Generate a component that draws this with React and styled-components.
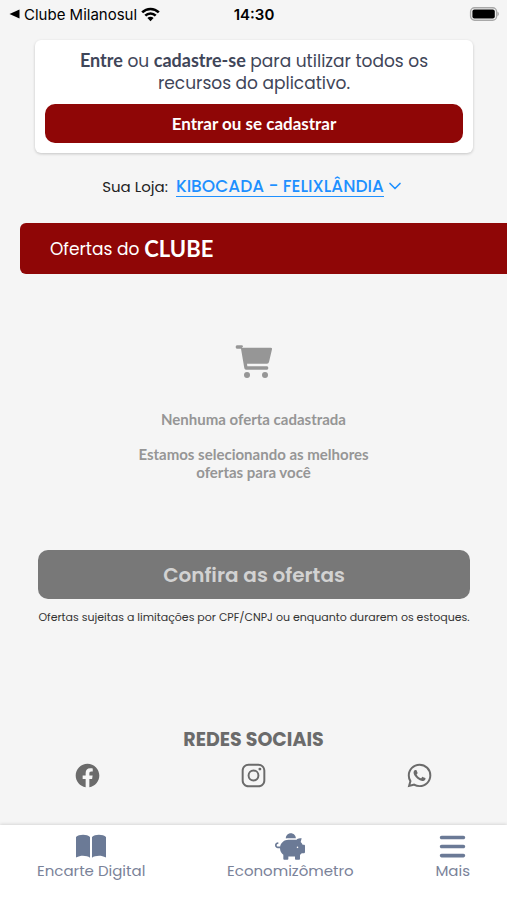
import styled, { createGlobalStyle } from 'styled-components';
import { IoLogoFacebook, IoLogoInstagram, IoLogoWhatsapp } from 'react-icons/io5';
import { FaPiggyBank } from 'react-icons/fa';
import { FaBars } from 'react-icons/fa6';
import { FiChevronDown } from 'react-icons/fi';

const GlobalStyle = createGlobalStyle`
    :root {
        --color-brand: #8f0606;
        --color-page: #f5f5f5;
        --color-link: #1e90ff;
        --color-slate: #6b7a96;
        --color-slate-text: #7a8299;
        --color-grey: #6b6b6b;
        --font-text: Poppins, Inter, sans-serif;
        --font-strong: Lato, sans-serif;
    }

    *, *::before, *::after {
        box-sizing: border-box;
        margin: 0;
        padding: 0;
    }

    body {
        background-color: var(--color-page);
        font-family: var(--font-text);
    }

    button {
        border: none;
        font-family: inherit;
        cursor: pointer;
    }

    svg {
        display: block;
    }
`;

const Page = styled.div`
    min-height: 100vh;
    display: flex;
    flex-direction: column;
`;

const StyledStatusBar = styled.header`
    display: grid;
    grid-template-columns: 1fr auto 1fr;
    align-items: center;
    height: 28px;
    padding: 0 8px 0 9px;
    color: #000;
    font-family: Inter, sans-serif;
    font-size: 15px;
`;

const BackLink = styled.a`
    display: flex;
    align-items: center;
    gap: 4px;
    color: inherit;
    text-decoration: none;
`;

const Clock = styled.time`
    font-weight: 600;
`;

const BatteryIcon = styled.svg`
    justify-self: end;
`;

const Main = styled.main`
    flex: 1;
    display: flex;
    flex-direction: column;
`;

const LoginCard = styled.section`
    margin: 12px 34px 0 35px;
    padding: 9px 10px 10px;
    border-radius: 6px;
    background-color: #fff;
    box-shadow: 0 1px 3px rgba(0, 0, 0, 0.2);
    text-align: center;
`;

const LoginText = styled.p`
    margin-bottom: 10px;
    color: #3f4659;
    font-size: 17px;
    line-height: 22px;

    strong {
        font-family: var(--font-strong);
        font-size: 18px;
        font-weight: 700;
    }
`;

const LoginButton = styled.button`
    width: 100%;
    height: 39px;
    border-radius: 10px;
    background-color: var(--color-brand);
    color: #fff;

    && {
        font: 700 17px var(--font-strong);
    }
`;

const StoreRow = styled.div`
    display: flex;
    align-items: center;
    justify-content: center;
    gap: 8px;
    height: 28px;
    margin-top: 19px;
    color: #222;
    font-size: 15px;
`;

const StoreButton = styled.button`
    display: flex;
    align-items: center;
    gap: 1px;
    background: none;
    color: var(--color-link);
    font-size: 17px;
    font-weight: 500;
    line-height: 20px;

    span {
        border-bottom: 1px solid var(--color-link);
    }
`;

const Banner = styled.h1`
    display: flex;
    align-items: center;
    gap: 5px;
    height: 51px;
    margin: 23px 0 0 20px;
    padding-left: 30px;
    border-radius: 6px 0 0 6px;
    background-color: var(--color-brand);
    color: #fff;
    font-size: 17px;
    font-weight: 400;

    strong {
        font-family: var(--font-strong);
        font-size: 22px;
        font-weight: 700;
    }
`;

const Empty = styled.section`
    display: flex;
    flex-direction: column;
    align-items: center;
    gap: 17px;
    padding-top: 70px;
    color: #969696;
    font: 700 15px/18px var(--font-strong);
    text-align: center;

    svg {
        margin-bottom: 14px;
    }

    p {
        max-width: 240px;
    }
`;

const Offers = styled.section`
    margin: 69px 37px 0 38px;
    color: #333;
    font-size: 11px;
    line-height: 16px;
    text-align: center;
`;

const OffersButton = styled.button`
    width: 100%;
    height: 49px;
    margin-bottom: 10px;
    border-radius: 10px;
    background-color: #787878;
    color: #d2d2d2;
    font-size: 20px;
    font-weight: 600;
`;

const Social = styled.section`
    margin: 102px 5px 0;
    color: var(--color-grey);
    text-align: center;

    h2 {
        font-size: 19px;
        font-weight: 700;
        line-height: 26px;
    }
`;

const SocialList = styled.div`
    display: grid;
    grid-template-columns: repeat(3, 1fr);
    justify-items: center;
    margin-top: 9px;

    a {
        color: inherit;
    }
`;

const StyledNav = styled.nav`
    display: flex;
    justify-content: space-between;
    height: 75px;
    padding: 7px 37px 0;
    background-color: #fff;
    box-shadow: 0 -1px 3px rgba(0, 0, 0, 0.12);
`;

const NavItem = styled.a`
    display: flex;
    flex-direction: column;
    align-items: center;
    color: var(--color-slate-text);
    font-size: 15px;
    line-height: 20px;
    text-decoration: none;

    svg {
        height: 29px;
        color: var(--color-slate);
    }
`;

function CartIcon() {
    return (
        <svg width="38" height="35" viewBox="0 0 114 105" fill="currentColor" aria-hidden="true">
            <path d="M20 11h87q5 0 4 5l-9 38q-1 5-6 5H36l1 8h59q4 0 4 5t-4 5H33q-4 0-5-4L18 14H6q-4 0-4-5t4-5h14q4 0 4 4z" />
            <circle cx="36" cy="93" r="9" />
            <circle cx="90" cy="93" r="9" />
        </svg>
    );
}

function BookIcon({ size }) {
    return (
        <svg width={size} viewBox="0 0 90 87" fill="currentColor" aria-hidden="true">
            <path d="M0 15C8 7 33 6 42 15v62C33 70 12 69 2 76q-2 1-2-2z" />
            <path d="M90 15C82 7 57 6 48 15v62c9-7 30-8 40-1q2 1 2-2z" />
        </svg>
    );
}

const socials = [
    { name: 'Facebook', Icon: IoLogoFacebook },
    { name: 'Instagram', Icon: IoLogoInstagram },
    { name: 'WhatsApp', Icon: IoLogoWhatsapp },
];

const navItems = [
    { label: 'Encarte Digital', Icon: BookIcon, size: 30 },
    { label: 'Economizômetro', Icon: FaPiggyBank, size: 30 },
    { label: 'Mais', Icon: FaBars, size: 29 },
];

function StatusBar() {
    return (
        <StyledStatusBar>
            <BackLink href="#voltar">
                <svg width="11" height="10" viewBox="0 0 11 10" aria-hidden="true">
                    <path d="M0.5 5 10.5 0.5v9z" fill="currentColor" />
                </svg>
                Clube Milanosul
                <svg width="19" height="15" viewBox="0 0 19 15" aria-hidden="true">
                    <g fill="none" stroke="currentColor" strokeWidth="2.6">
                        <path d="M1.2 5.4a11.8 11.8 0 0 1 16.6 0" />
                        <path d="M4.3 8.7a7.4 7.4 0 0 1 10.4 0" />
                    </g>
                    <path d="M9.5 14.2 6.4 11a4.4 4.4 0 0 1 6.2 0z" fill="currentColor" />
                </svg>
            </BackLink>
            <Clock>14:30</Clock>
            <BatteryIcon width="30" height="14" viewBox="0 0 30 14" role="img" aria-label="Bateria">
                <rect x="1.6" y="0.8" width="26" height="12.4" rx="4" fill="none" stroke="#a8a8a8" strokeWidth="1.4" />
                <rect x="3.4" y="2.6" width="22.4" height="8.8" rx="2" fill="#000" />
                <path d="M28.4 4.8c2 .6 2 3.8 0 4.4z" fill="#a8a8a8" />
            </BatteryIcon>
        </StyledStatusBar>
    );
}

function Nav() {
    return (
        <StyledNav>
            {navItems.map(({ label, Icon, size }) => (
                <NavItem href="#" key={label}>
                    <Icon size={size} />
                    {label}
                </NavItem>
            ))}
        </StyledNav>
    );
}

function App() {
    return (
        <Page>
            <GlobalStyle />
            <StatusBar />
            <Main>
                <LoginCard>
                    <LoginText>
                        <strong>Entre</strong> ou <strong>cadastre-se</strong> para utilizar todos os
                        recursos do aplicativo.
                    </LoginText>
                    <LoginButton>Entrar ou se cadastrar</LoginButton>
                </LoginCard>

                <StoreRow>
                    Sua Loja:
                    <StoreButton>
                        <span>KIBOCADA - FELIXLÂNDIA</span>
                        <FiChevronDown size={20} />
                    </StoreButton>
                </StoreRow>

                <Banner>
                    Ofertas do <strong>CLUBE</strong>
                </Banner>

                <Empty>
                    <CartIcon />
                    <p>Nenhuma oferta cadastrada</p>
                    <p>Estamos selecionando as melhores ofertas para você</p>
                </Empty>

                <Offers>
                    <OffersButton>Confira as ofertas</OffersButton>
                    <p>Ofertas sujeitas a limitações por CPF/CNPJ ou enquanto durarem os estoques.</p>
                </Offers>

                <Social>
                    <h2>REDES SOCIAIS</h2>
                    <SocialList>
                        {socials.map(({ name, Icon }) => (
                            <a href="#" key={name} aria-label={name}>
                                <Icon size={27} />
                            </a>
                        ))}
                    </SocialList>
                </Social>
            </Main>
            <Nav />
        </Page>
    );
}

export default App;
